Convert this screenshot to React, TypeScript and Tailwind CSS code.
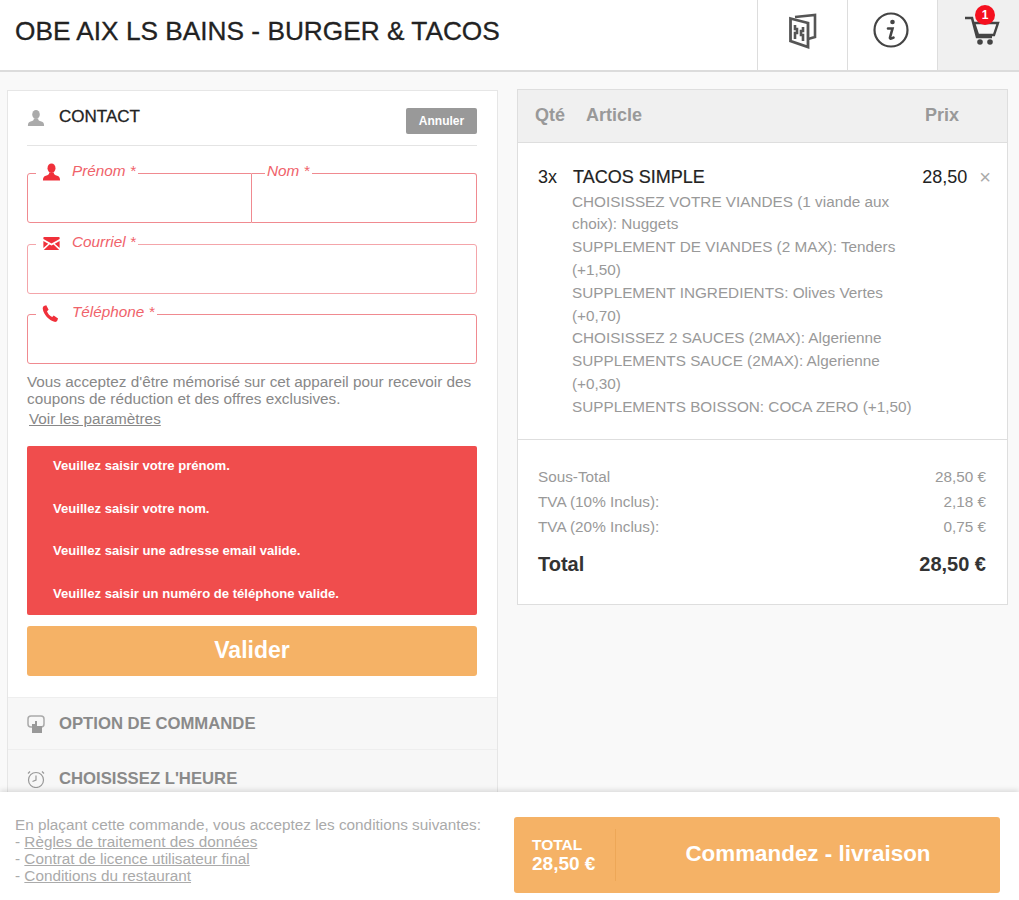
import type { ReactNode } from 'react'

function PersonIcon({ className }: { className: string }) {
  return (
    <svg className={className} viewBox="0 0 20 18" fill="currentColor">
      <ellipse cx="10" cy="5" rx="4.2" ry="5" />
      <path d="M7.5 9.5c.3 2-1 2.6-3.5 3.5C2 13.700 1 14.500 1 18h18c0-3.500-1-4.300-3-5-2.500-.9-3.800-1.500-3.500-3.500z" />
    </svg>
  )
}

function MailIcon({ className }: { className: string }) {
  return (
    <svg className={className} viewBox="0 0 20 16" fill="currentColor">
      <path d="M1 0h18a1 1 0 0 1 1 1v1.500L10 8 0 2.500V1a1 1 0 0 1 1-1z" />
      <path d="M0 5l6 3.300L0 13.500zM20 5l-6 3.300 6 5.200zM7.500 9.200 10 10.500l2.500-1.300L19.500 16H.5z" />
    </svg>
  )
}

function PhoneIcon({ className }: { className: string }) {
  return (
    <svg className={className} viewBox="0 0 18 18" fill="currentColor">
      <path d="M2 1 4.500.2 7 5 5.300 6.600c.8 2.500 3 5 5.500 6.100l1.600-1.500 4.600 3-.9 2.600c-.4.800-1.600 1.300-3 1C7.500 16.500 1.500 10 .8 4 .7 2.700 1.200 1.600 2 1z" />
    </svg>
  )
}

function MenuIcon() {
  return (
    <svg className="w-[28px] h-[36px]" viewBox="0 0 28 36" fill="none" stroke="#555">
      <path d="M6 4 26 2v22l-7 2" strokeWidth="2.600" />
      <path d="M1.500 5.500 19 10v24L1.500 28z" fill="#fff" strokeWidth="2.800" />
      <path d="M6 12v4h2v4H6v6M14 14v4h-2v4h2v6" strokeWidth="2.600" />
    </svg>
  )
}

function InfoIcon() {
  return (
    <svg className="w-[36px] h-[36px]" viewBox="0 0 36 36" fill="none" stroke="#444">
      <circle cx="18" cy="18" r="16.500" strokeWidth="2.200" />
      <circle cx="19.500" cy="10" r="2.300" fill="#444" stroke="none" />
      <path d="M15 16.500h4.500l-2.500 9c-.3 1.300.7 1.700 3.500.2" strokeWidth="2.600" strokeLinecap="round" />
    </svg>
  )
}

function CartIcon() {
  return (
    <svg className="w-[36px] h-[34px]" viewBox="0 0 36 34" fill="none" stroke="#444">
      <path d="M1 5h7l5 19h15" strokeWidth="2.600" />
      <path d="M10 10h24l-4 12H14z" strokeWidth="2.400" fill="#f6f6f6" />
      <circle cx="16" cy="29" r="2.800" fill="#444" stroke="none" />
      <circle cx="26" cy="29" r="2.800" fill="#444" stroke="none" />
    </svg>
  )
}

function TouchIcon() {
  return (
    <svg className="w-[18px] h-[18px]" viewBox="0 0 18 18" fill="none" stroke="#aaa">
      <rect x="1" y="1" width="16" height="11" rx="3" strokeWidth="1.500" />
      <path d="M5 18V9h3v-3h2v5h5v7z" fill="#999" stroke="none" />
    </svg>
  )
}

function ClockIcon() {
  return (
    <svg className="w-[18px] h-[18px]" viewBox="0 0 18 18" fill="none" stroke="#999" strokeWidth="1.200">
      <circle cx="9" cy="10" r="7.500" />
      <path d="M9 5.500V10l-3.500 1.500M3 1.500 1 3.500M15 1.500l2 2" />
    </svg>
  )
}

function Field({ label, icon, labelClass, className }: { label: string; icon?: ReactNode; labelClass: string; className: string }) {
  return (
    <div className={className}>
      {icon}
      <span className={`absolute -top-[12px] bg-white pl-[2px] pr-[2px] text-[15.300px] leading-[17px] italic text-[#f0626a] ${labelClass}`}>
        {label}
      </span>
    </div>
  )
}

const details = [
  'CHOISISSEZ VOTRE VIANDES (1 viande aux choix): Nuggets',
  'SUPPLEMENT DE VIANDES (2 MAX): Tenders (+1,50)',
  'SUPPLEMENT INGREDIENTS: Olives Vertes (+0,70)',
  'CHOISISSEZ 2 SAUCES (2MAX): Algerienne',
  'SUPPLEMENTS SAUCE (2MAX): Algerienne (+0,30)',
  'SUPPLEMENTS BOISSON: COCA ZERO (+1,50)',
]

const errors = [
  'Veuillez saisir votre prénom.',
  'Veuillez saisir votre nom.',
  'Veuillez saisir une adresse email valide.',
  'Veuillez saisir un numéro de téléphone valide.',
]

const totals = [
  ['Sous-Total', '28,50 €'],
  ['TVA (10% Inclus):', '2,18 €'],
  ['TVA (20% Inclus):', '0,75 €'],
]

export default function App() {
  return (
    <div className="h-[900px] flex flex-col overflow-hidden bg-[#f9f9f9] font-['Liberation_Sans',Arial,sans-serif]">
      <header className="h-[72px] shrink-0 flex bg-white border-b-2 border-[#dcdcdc]">
        <h1 className="flex-1 pl-[15px] pt-[15px] text-[26.250px] leading-[32px] text-[#222] [-webkit-text-stroke:0.3px_#222]">
          OBE AIX LS BAINS - BURGER &amp; TACOS
        </h1>
        <div className="w-[90px] pb-[9px] flex items-center justify-center border-l border-[#ddd]">
          <MenuIcon />
        </div>
        <div className="w-[90px] pb-[10px] pr-[3px] flex items-center justify-center border-l border-[#ddd]">
          <InfoIcon />
        </div>
        <div className="w-[82px] pb-[10px] pl-[6px] relative flex items-center justify-center border-l border-[#ddd] bg-[#f0f0f0]">
          <CartIcon />
          <span className="absolute top-[5px] left-[37px] w-[20px] h-[20px] rounded-full bg-[#f5101f] text-white text-[12px] leading-[20px] font-bold text-center">1</span>
        </div>
      </header>

      <main className="flex-1 min-h-0 overflow-hidden flex items-start gap-[19px] pl-[7px] pr-[11px] pt-[17px]">
        <section className="mt-[1px] w-[491px] shrink-0 bg-white border border-[#e6e6e6]">
          <div className="pl-[19px] pr-[20px] pt-[16px]">
            <div className="h-[39px] flex border-b border-[#e4e4e4]">
              <PersonIcon className="w-[18px] h-[18px] mt-[2px] text-[#aaa]" />
              <span className="ml-[14px] text-[17px] leading-[20px] text-[#222] [-webkit-text-stroke:0.3px_#222]">CONTACT</span>
              <button className="ml-auto mt-[1px] w-[71px] h-[26px] rounded-[2px] bg-[#999] text-white text-[12px] font-bold">Annuler</button>
            </div>

            <div className="mt-[27px] flex">
              <Field
                className="relative w-[225px] h-[50px] border border-[#f08a90] rounded-l-[3px]"
                label="Prénom *"
                labelClass="left-[42px]"
                icon={<span className="absolute -top-[11px] left-[8px] w-[34px] flex justify-start pl-[6px] bg-white"><PersonIcon className="w-[19px] h-[18px] text-[#f0303a]" /></span>}
              />
              <Field
                className="relative flex-1 h-[50px] border border-l-0 border-[#f08a90] rounded-r-[3px]"
                label="Nom *"
                labelClass="left-[13px]"
              />
            </div>
            <Field
              className="relative mt-[21px] h-[50px] border border-[#f4a5aa] rounded-[3px]"
              label="Courriel *"
              labelClass="left-[42px]"
              icon={<span className="absolute -top-[8px] left-[8px] w-[34px] flex justify-start pl-[6px] bg-white"><MailIcon className="w-[19px] h-[13px] text-[#f0303a]" /></span>}
            />
            <Field
              className="relative mt-[20px] h-[50px] border border-[#f08a90] rounded-[3px]"
              label="Téléphone *"
              labelClass="left-[42px]"
              icon={<span className="absolute -top-[10px] left-[8px] w-[34px] flex justify-start pl-[6px] bg-white"><PhoneIcon className="w-[17px] h-[17px] text-[#f0303a]" /></span>}
            />

            <p className="mt-[9px] text-[15.300px] leading-[17px] text-[#888] whitespace-nowrap">
              Vous acceptez d'être mémorisé sur cet appareil pour recevoir des
              <br />
              coupons de réduction et des offres exclusives.
            </p>
            <a className="block mt-[3px] ml-[2px] text-[15.300px] leading-[17px] text-[#888] underline">Voir les paramètres</a>

            <div className="mt-[19px] h-[169px] rounded-[2px] bg-[#f04d4d] pl-[26px] pt-[13px] flex flex-col gap-[28.500px]">
              {errors.map((e) => (
                <p key={e} className="text-[13.100px] leading-[14px] font-bold text-white">{e}</p>
              ))}
            </div>

            <button className="mt-[11px] block w-full h-[50px] pb-[2px] rounded-[3px] bg-[#f5b266] text-white text-[23px] font-bold">Valider</button>
          </div>

          <div className="mt-[21px] h-[53px] flex items-center gap-[14px] pl-[19px] bg-[#f7f7f7] border-t border-b border-[#eeeeee]">
            <TouchIcon />
            <span className="text-[16.700px] font-bold text-[#8a8a8a]">OPTION DE COMMANDE</span>
          </div>
          <div className="h-[54px] pt-[4px] flex items-center gap-[14px] pl-[19px] bg-[#f7f7f7]">
            <ClockIcon />
            <span className="text-[16.700px] font-bold text-[#8a8a8a]">CHOISISSEZ L'HEURE</span>
          </div>
        </section>

        <section className="flex-1 bg-white border border-[#dedede]">
          <div className="h-[53px] pb-[2px] flex items-center bg-[#f0f0f0] border-b border-[#dedede] text-[18px] font-bold text-[#999]">
            <span className="ml-[17px] w-[51px]">Qté</span>
            <span className="flex-1">Article</span>
            <span className="mr-[48px]">Prix</span>
          </div>

          <div className="flex pt-[24px] pb-[20px] pl-[20px] border-b border-[#dedede]">
            <span className="w-[35px] text-[18px] leading-[20px] text-[#222]">3x</span>
            <div className="w-[346px]">
              <p className="mb-[3.600px] text-[18px] leading-[20px] text-[#222] [-webkit-text-stroke:0.2px_#222]">TACOS SIMPLE</p>
              {details.map((d) => (
                <p key={d} className="-ml-[1px] text-[15.300px] leading-[22.800px] text-[#999]">{d}</p>
              ))}
            </div>
            <span className="ml-auto text-[18px] leading-[20px] text-[#222]">28,50</span>
            <span className="ml-[12px] mr-[16px] text-[20px] leading-[20px] text-[#aaa]">×</span>
          </div>

          <div className="pl-[20px] pr-[21px] pt-[24px] pb-[27px]">
            {totals.map(([label, value]) => (
              <div key={label} className="flex justify-between text-[15.300px] leading-[25px] text-[#999]">
                <span>{label}</span>
                <span>{value}</span>
              </div>
            ))}
            <div className="mt-[13px] flex justify-between text-[20px] leading-[25px] font-bold text-[#333]">
              <span>Total</span>
              <span>28,50 €</span>
            </div>
          </div>
        </section>
      </main>

      <footer className="h-[108px] shrink-0 flex bg-white shadow-[0_-2px_5px_rgba(0,0,0,0.12)] z-10">
        <div className="w-[514px] pl-[15px] pt-[24px] text-[15.300px] leading-[17px] text-[#aaa] whitespace-nowrap">
          <p>En plaçant cette commande, vous acceptez les conditions suivantes:</p>
          <p>- <a className="underline">Règles de traitement des données</a></p>
          <p>- <a className="underline">Contrat de licence utilisateur final</a></p>
          <p>- <a className="underline">Conditions du restaurant</a></p>
        </div>
        <button className="mt-[25px] w-[486px] h-[76px] rounded-[3px] bg-[#f5b266] text-white flex items-center">
          <div className="w-[102px] h-[52px] pl-[18px] border-r border-[#eda757] text-left">
            <p className="text-[15.500px] leading-[19px] font-bold mt-[6px]">TOTAL</p>
            <p className="text-[19px] leading-[19px] font-bold">28,50 €</p>
          </div>
          <span className="flex-1 pb-[2px] text-center text-[22.400px] font-bold">Commandez - livraison</span>
        </button>
      </footer>
    </div>
  )
}
